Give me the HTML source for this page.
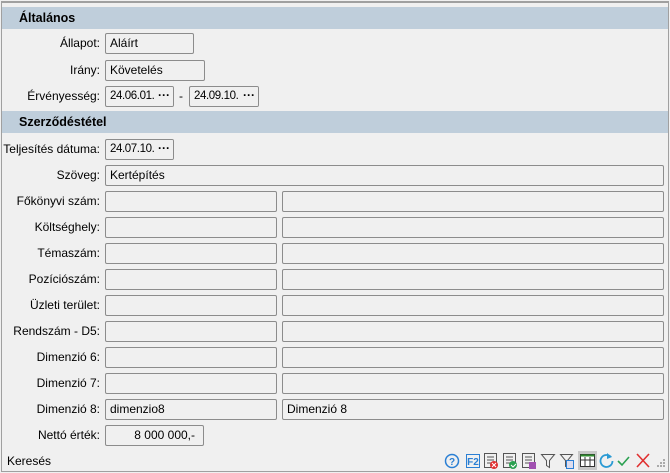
<!DOCTYPE html>
<html><head><meta charset="utf-8"><style>
*{margin:0;padding:0;box-sizing:border-box}
body{width:670px;height:473px;background:#f0f0f0;font-family:"Segoe UI","Liberation Sans",sans-serif;font-size:12px;color:#000;position:relative;overflow:hidden}
.a{position:absolute}
.frame{left:1px;top:1px;width:668px;height:471px;border:1px solid #a0a0a0;border-top:2px solid #a0a0a0}
.hd{left:2px;width:666px;height:22px;background:#bfcedb;font-weight:bold;padding-left:17px;line-height:22px;font-size:12.5px}
.lb{width:100px;text-align:right;left:0;line-height:20px}
.bx{height:21px;border:1px solid #8c8c8c;border-radius:2px;background:#f0f0f0;padding-left:4px;line-height:19px;white-space:nowrap;overflow:hidden}
.dt{letter-spacing:-0.4px;font-size:11.5px}
.dots{position:absolute;right:0;top:0;width:18px;height:19px;background:#f0f0f0;text-align:center;font-weight:bold;letter-spacing:0;font-size:12px;line-height:17px}
</style></head><body>
<div class="a frame"></div>
<div class="a hd" style="top:7px">Általános</div>
<div class="a lb" style="top:33px">Állapot:</div><div class="a bx" style="left:105px;top:33px;width:89px">Aláírt</div>
<div class="a lb" style="top:60px">Irány:</div><div class="a bx" style="left:105px;top:60px;width:100px">Követelés</div>
<div class="a lb" style="top:86px">Érvényesség:</div>
<div class="a bx dt" style="left:105px;top:86px;width:69px">24.06.01.<span class="dots">···</span></div>
<div class="a" style="left:179px;top:86px;line-height:20px">-</div>
<div class="a bx dt" style="left:189px;top:86px;width:70px">24.09.10.<span class="dots">···</span></div>
<div class="a hd" style="top:111px">Szerződéstétel</div>
<div class="a lb" style="top:139px">Teljesítés dátuma:</div>
<div class="a bx dt" style="left:105px;top:139px;width:69px">24.07.10.<span class="dots">···</span></div>
<div class="a lb" style="top:165px">Szöveg:</div><div class="a bx" style="left:105px;top:165px;width:559px">Kertépítés</div>

<div class="a lb" style="top:191px">Főkönyvi szám:</div><div class="a bx" style="left:105px;top:191px;width:172px"></div><div class="a bx" style="left:282px;top:191px;width:382px"></div>
<div class="a lb" style="top:217px">Költséghely:</div><div class="a bx" style="left:105px;top:217px;width:172px"></div><div class="a bx" style="left:282px;top:217px;width:382px"></div>
<div class="a lb" style="top:243px">Témaszám:</div><div class="a bx" style="left:105px;top:243px;width:172px"></div><div class="a bx" style="left:282px;top:243px;width:382px"></div>
<div class="a lb" style="top:269px">Pozíciószám:</div><div class="a bx" style="left:105px;top:269px;width:172px"></div><div class="a bx" style="left:282px;top:269px;width:382px"></div>
<div class="a lb" style="top:295px">Üzleti terület:</div><div class="a bx" style="left:105px;top:295px;width:172px"></div><div class="a bx" style="left:282px;top:295px;width:382px"></div>
<div class="a lb" style="top:321px">Rendszám - D5:</div><div class="a bx" style="left:105px;top:321px;width:172px"></div><div class="a bx" style="left:282px;top:321px;width:382px"></div>
<div class="a lb" style="top:347px">Dimenzió 6:</div><div class="a bx" style="left:105px;top:347px;width:172px"></div><div class="a bx" style="left:282px;top:347px;width:382px"></div>
<div class="a lb" style="top:373px">Dimenzió 7:</div><div class="a bx" style="left:105px;top:373px;width:172px"></div><div class="a bx" style="left:282px;top:373px;width:382px"></div>
<div class="a lb" style="top:399px">Dimenzió 8:</div><div class="a bx" style="left:105px;top:399px;width:172px">dimenzio8</div><div class="a bx" style="left:282px;top:399px;width:382px">Dimenzió 8</div>
<div class="a lb" style="top:425px">Nettó érték:</div><div class="a bx" style="left:105px;top:425px;width:99px;text-align:right;padding-right:8px">8 000 000,-</div>
<div class="a" style="left:7px;top:452px;line-height:18px">Keresés</div>

<svg class="a" style="left:440px;top:449px" width="230" height="24" viewBox="0 0 230 24">
<circle cx="12" cy="12" r="6.5" fill="none" stroke="#2a7fd4" stroke-width="1.5"/>
<text x="12" y="16" font-size="10" font-weight="bold" fill="#2a7fd4" text-anchor="middle" font-family="Liberation Sans">?</text>
<rect x="26.5" y="5.5" width="13" height="13" fill="none" stroke="#2a7fd4"/>
<text x="33" y="16" font-size="10" font-weight="bold" fill="#2a7fd4" text-anchor="middle" font-family="Liberation Sans">F2</text>
<g fill="none" stroke="#555"><rect x="44.5" y="4.5" width="12" height="14"/><path d="M47 8h7M47 11h7M47 14h4"/></g>
<circle cx="54" cy="16" r="4" fill="#e03030"/><path d="M52 14l4 4M56 14l-4 4" stroke="#fff"/>
<g fill="none" stroke="#555"><rect x="63.5" y="4.5" width="12" height="14"/><path d="M66 8h7M66 11h7M66 14h4"/></g>
<circle cx="73" cy="16" r="4" fill="#2aa050"/><path d="M71 16l2 2 3-3" stroke="#fff" fill="none"/>
<g fill="none" stroke="#555"><rect x="82.5" y="4.5" width="12" height="14"/><path d="M85 8h7M85 11h7M85 14h4"/></g>
<rect x="89" y="13" width="7" height="7" fill="#a050b0"/>
<path d="M101.5 5.5h13l-5 6v7l-3-2v-5z" fill="none" stroke="#555"/>
<path d="M120.5 5.5h12l-5 6v7l-2-1v-6z" fill="none" stroke="#555"/><rect x="126.5" y="11.5" width="7" height="8" fill="#dde" stroke="#2a7fd4"/>
<rect x="138" y="2" width="19" height="19" fill="#c8c8c8"/>
<rect x="140.5" y="5.5" width="14" height="12" fill="#fff" stroke="#333"/><rect x="140.5" y="5.5" width="14" height="2" fill="#2e8b2e"/><path d="M145 8v9M150 8v9M141 11h13" stroke="#333"/>
<path d="M171 8a6 6 0 1 0 1.5 4" fill="none" stroke="#2a9ad4" stroke-width="1.8"/><path d="M167 4l5 4-5 2z" fill="#2a9ad4"/>
<path d="M178 12l4 4 7-8" fill="none" stroke="#2aa050" stroke-width="1.6"/>
<path d="M197 5l12 13M209 5l-12 13" stroke="#e03030" stroke-width="1.6"/>
<g fill="#aaa"><rect x="223" y="10" width="2" height="2"/><rect x="220" y="13" width="2" height="2"/><rect x="223" y="13" width="2" height="2"/><rect x="217" y="16" width="2" height="2"/><rect x="220" y="16" width="2" height="2"/><rect x="223" y="16" width="2" height="2"/></g>
</svg>
</body></html>
